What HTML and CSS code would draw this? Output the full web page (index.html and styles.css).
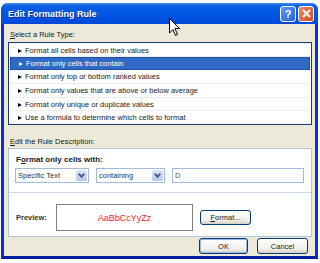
FILE: index.html
```html
<!DOCTYPE html>
<html lang="en">
<head>
    <meta charset="UTF-8">
    <title>Edit Formatting Rule</title>
    <link rel="stylesheet" href="styles.css">
</head>
<body>
    <div class="window">
        <div class="titlebar">
            <span class="title">Edit Formatting Rule</span>
            <div class="caption-buttons">
                <span class="cap-btn help">?</span>
                <span class="cap-btn close">
                    <svg width="9" height="9" viewBox="0 0 9 9"><path d="M1 1 L8 8 M8 1 L1 8" stroke="#fff" stroke-width="2"/></svg>
                </span>
            </div>
        </div>

        <div class="content">
            <div class="label"><u>S</u>elect a Rule Type:</div>
            <ul class="rule-list">
                <li class="row-a">Format all cells based on their values</li>
                <li class="row-a selected">Format only cells that contain</li>
                <li class="row-b">Format only top or bottom ranked values</li>
                <li class="row-b">Format only values that are above or below average</li>
                <li class="row-a">Format only unique or duplicate values</li>
                <li class="row-a">Use a formula to determine which cells to format</li>
            </ul>

            <div class="label desc-label"><u>E</u>dit the Rule Description:</div>
            <div class="desc-box">
                <div class="desc-title">F<u>o</u>rmat only cells with:</div>
                <div class="criteria">
                    <div class="combo combo-type"><span>Specific Text</span><span class="drop"></span></div>
                    <div class="combo combo-op"><span>containing</span><span class="drop"></span></div>
                    <div class="textbox">D</div>
                </div>
                <div class="preview-row">
                    <span class="preview-label">Preview:</span>
                    <div class="preview-box">AaBbCcYyZz</div>
                    <button class="btn format-btn"><u>F</u>ormat...</button>
                </div>
            </div>

            <div class="dialog-buttons">
                <button class="btn default">OK</button>
                <button class="btn">Cancel</button>
            </div>
        </div>
    </div>

    <svg class="cursor" width="12" height="19" viewBox="0 0 12 19">
        <path d="M0.5 0.5 L0.5 15 L4 11.5 L6.5 17.5 L8.5 16.5 L6 10.5 L10.5 10.5 Z" fill="#fff" stroke="#000" stroke-width="1"/>
    </svg>
</body>
</html>
```

FILE: styles.css
```css
body {
    margin: 0;
    background: #fff;
    font-family: 'Liberation Sans', Arial, sans-serif;
    font-size: 7.5px;
    color: #222;
}

.window {
    margin: 3px 0 0 1px;
    width: 317px;
    height: 256px;
    background: #ece9d8;
    border-radius: 7px 7px 0 0;
    box-sizing: border-box;
    border: 3px solid #0831d9;
    border-top: none;
    border-bottom-color: #001ea0;
    display: flex;
    flex-direction: column;
}

.titlebar {
    height: 21px;
    margin: 0 -3px;
    border-radius: 7px 7px 0 0;
    background: linear-gradient(#3c8cf3 0, #0a5fe0 3px, #0055e5 12px, #0048d8 21px);
    display: flex;
    align-items: center;
    justify-content: space-between;
    padding: 0 4px 0 7px;
}

.title {
    color: #fff;
    font-weight: bold;
    font-size: 9px;
    text-shadow: 1px 1px 0 #0a2a8a;
}

.caption-buttons {
    display: flex;
    gap: 2px;
}

.cap-btn {
    width: 14px;
    height: 14px;
    border: 1px solid #fff;
    border-radius: 3px;
    display: flex;
    align-items: center;
    justify-content: center;
    color: #fff;
    font-weight: bold;
    font-size: 11px;
}

.help {
    background: linear-gradient(135deg, #5f97f6, #2262e0);
}

.close {
    background: linear-gradient(135deg, #e98b6c, #d24a20);
}

.content {
    padding: 6px 3px 0 4px;
    display: flex;
    flex-direction: column;
}

.label {
    height: 10px;
    line-height: 10px;
    padding-left: 2px;
}

.rule-list {
    list-style: none;
    margin: 2px 0 0 0;
    padding: 1px 1px;
    background: #fff;
    border: 1px solid #1c3f6e;
    height: 83px;
    box-sizing: border-box;
}

.rule-list li {
    padding-left: 8px;
    border-bottom: 1px solid #eeeeee;
    box-sizing: border-box;
}

.rule-list li::before {
    content: "";
    display: inline-block;
    width: 0;
    height: 0;
    border-left: 4px solid #000;
    border-top: 2.5px solid transparent;
    border-bottom: 2.5px solid transparent;
    margin-right: 3px;
    vertical-align: 0;
}

.row-a {
    height: 13px;
    line-height: 13px;
}

.row-b {
    height: 14px;
    line-height: 14px;
}

.rule-list li.selected {
    background: #316ac5;
    color: #fff;
    border: 1px solid #1f4fa8;
    line-height: 11px;
}

.rule-list li.selected::before {
    border-left-color: #fff;
}

.desc-label {
    margin-top: 12px;
}

.desc-box {
    margin-top: 1px;
    height: 89px;
    background: #fff;
    border: 1px solid #b3c3d8;
    box-sizing: border-box;
    padding: 5px 0 0 0;
}

.desc-title {
    font-weight: bold;
    padding-left: 7px;
    height: 11px;
    line-height: 11px;
    font-size: 8px;
}

.criteria {
    display: flex;
    gap: 7px;
    padding: 3px 7px 9px 6px;
    border-bottom: 1px solid #c9d8ee;
}

.combo {
    height: 15px;
    border: 1px solid #a4b9d6;
    box-sizing: border-box;
    display: flex;
    align-items: center;
    justify-content: space-between;
    padding-left: 2px;
    color: #333;
}

.combo-type {
    width: 74px;
}

.combo-op {
    width: 69px;
}

.drop {
    width: 11px;
    height: 11px;
    margin-right: 1px;
    border-radius: 2px;
    background: linear-gradient(#dbe6fc, #b4c8f3);
    position: relative;
}

.drop::after {
    content: "";
    position: absolute;
    left: 3px;
    top: 2px;
    width: 3px;
    height: 3px;
    border-right: 2px solid #4d6185;
    border-bottom: 2px solid #4d6185;
    transform: rotate(45deg);
}

.textbox {
    flex: 1;
    height: 15px;
    border: 1px solid #a4b9d6;
    box-sizing: border-box;
    padding-left: 2px;
    line-height: 13px;
    color: #555;
}

.preview-row {
    display: flex;
    align-items: center;
    padding: 11px 0 0 7px;
}

.preview-label {
    font-weight: bold;
    width: 40px;
    color: #333;
}

.preview-box {
    width: 137px;
    height: 27px;
    border: 1px solid #808080;
    box-sizing: border-box;
    color: #ff2020;
    font-size: 9px;
    display: flex;
    align-items: center;
    justify-content: center;
}

.btn {
    font-family: 'Liberation Sans', Arial, sans-serif;
    font-size: 7.5px;
    color: #222;
    height: 15px;
    padding: 0;
    border: 1px solid #003c74;
    border-radius: 3px;
    background: linear-gradient(#ffffff, #f0f0ea 70%, #d6d0c5);
}

.format-btn {
    width: 51px;
    margin-left: 7px;
}

.dialog-buttons {
    display: flex;
    justify-content: flex-end;
    gap: 9px;
    padding: 1px 4px 0 0;
}

.dialog-buttons .btn {
    width: 49px;
    height: 16px;
}

.dialog-buttons .btn:last-child {
    width: 51px;
}

.default {
    box-shadow: inset 0 0 0 1px #9cb8ed;
}

.cursor {
    position: absolute;
    left: 169px;
    top: 18px;
}
```
